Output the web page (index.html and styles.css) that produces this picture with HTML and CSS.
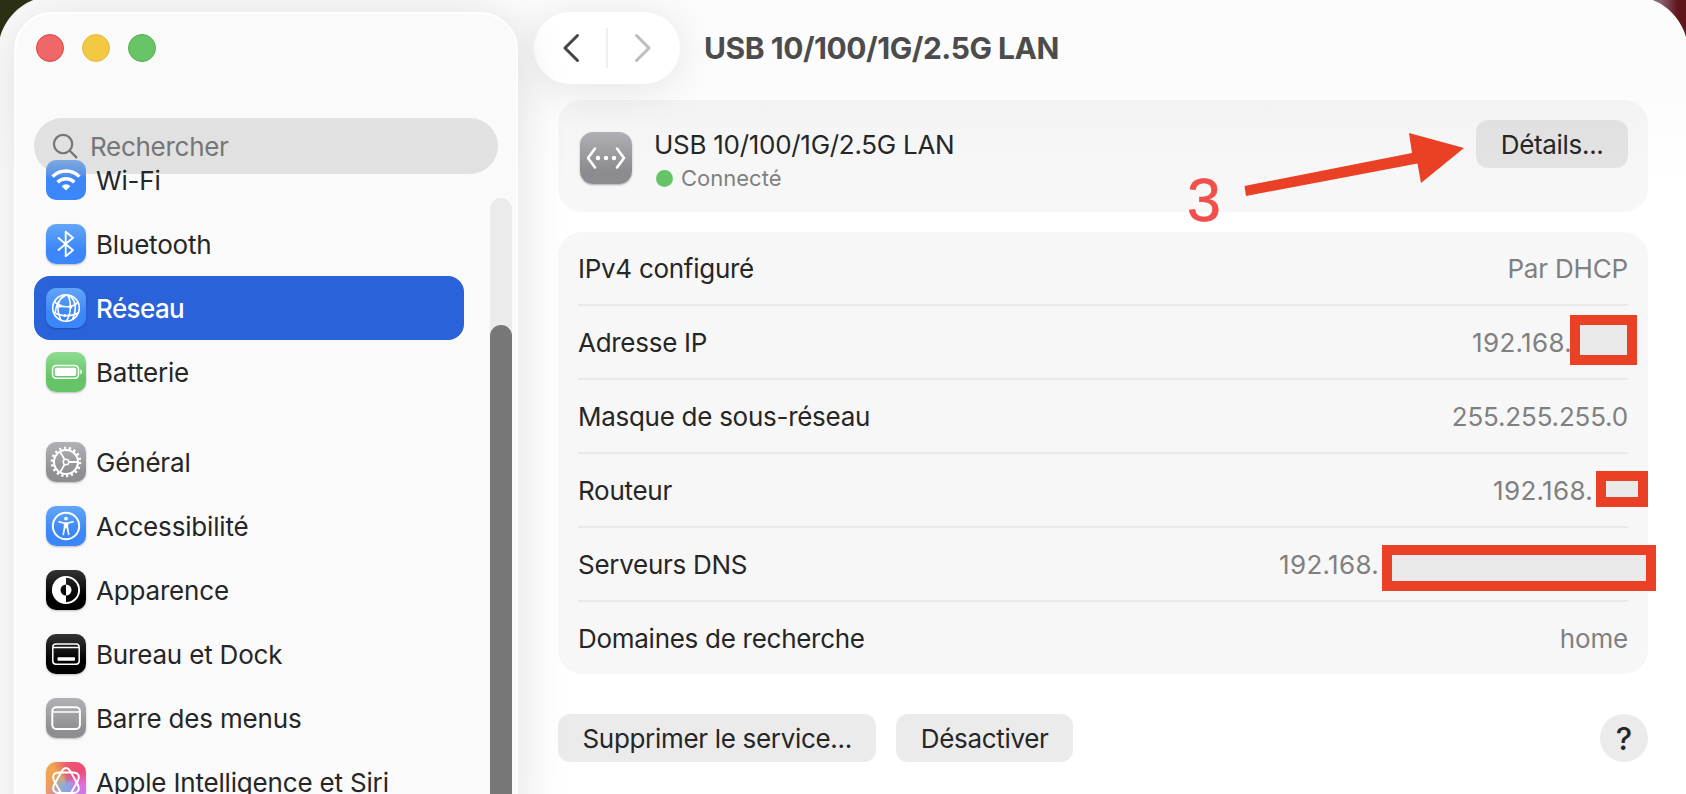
FILE: index.html
```html
<!DOCTYPE html>
<html lang="fr">
<head>
  <meta charset="utf-8">
  <title>Réseau</title>
  <link rel="stylesheet" href="styles.css">
</head>
<body>
  <div class="window">
    <aside class="sidebar">
      <div class="lights">
        <span class="light red"></span>
        <span class="light yellow"></span>
        <span class="light green"></span>
      </div>
      <ul class="menu">
        <li class="item">
          <svg class="icon blue faded" viewBox="0 0 40 40">
            <g fill="none" stroke="#fff" stroke-width="3.4">
              <path d="M6.6 16.6a19 19 0 0 1 26.8 0"/>
              <path d="M11.6 22.2a12 12 0 0 1 16.8 0"/>
            </g>
            <path d="M20 30.6l-4.4-4.4a6.2 6.2 0 0 1 8.8 0z" fill="#fff"/>
          </svg>
          <span>Wi-Fi</span>
        </li>
        <li class="item">
          <svg class="icon blue" viewBox="0 0 40 40">
            <path d="M12.5 14L27 26.2l-7.3 6V7.8l7.3 6L12.5 26" fill="none" stroke="#fff" stroke-width="1.9" stroke-linejoin="round" stroke-linecap="round"/>
          </svg>
          <span>Bluetooth</span>
        </li>
        <li class="item selected">
          <svg class="icon blue" viewBox="0 0 40 40">
            <g fill="none" stroke="#fff" stroke-width="1.6">
              <circle cx="20" cy="20" r="13.3"/>
              <path d="M8.5 13.5c3 4 8.5 5.5 13 5.2 4.5-.3 8.5-1.7 10.5-4.7M7.5 24c6 4.5 19 5 25 .5"/>
              <path d="M18.5 7c-7 5-8.5 14-3.5 25.5M21.5 7c4 6 4 18-1 26M23 7.500c7 4 8 14 3.5 24M20 7c-6 3-10 8-11 19"/>
            </g>
            <g fill="#fff">
              <circle cx="14" cy="18" r="1.8"/>
              <circle cx="24.5" cy="19" r="1.8"/>
              <circle cx="19" cy="27.5" r="1.5"/>
            </g>
          </svg>
          <span>Réseau</span>
        </li>
        <li class="item">
          <svg class="icon lime" viewBox="0 0 40 40">
            <rect x="6.5" y="13.5" width="26" height="12.8" rx="3.8" fill="none" stroke="#fff" stroke-width="1.5"/>
            <rect x="8.8" y="15.7" width="21.4" height="8.4" rx="1.8" fill="#fff"/>
            <path d="M34.3 17.3c2.2 1 2.2 4.2 0 5.2z" fill="#fff"/>
          </svg>
          <span>Batterie</span>
        </li>
      </ul>
      <ul class="menu">
        <li class="item">
          <svg class="icon gray" viewBox="0 0 40 40">
            <circle cx="20" cy="20" r="14" fill="none" stroke="#fff" stroke-width="2.6" stroke-dasharray="2.2 2.687"/>
            <circle cx="20" cy="20" r="12" fill="none" stroke="#fff" stroke-width="2"/>
            <circle cx="20" cy="20" r="2.8" fill="none" stroke="#fff" stroke-width="1.5"/>
            <path d="M23 20h9M18.5 17.4L14 9.6M18.5 22.6L14 30.4" stroke="#fff" stroke-width="1.8"/>
          </svg>
          <span>Général</span>
        </li>
        <li class="item">
          <svg class="icon blue" viewBox="0 0 40 40">
            <circle cx="20" cy="20" r="13.2" fill="none" stroke="#fff" stroke-width="2"/>
            <circle cx="20" cy="12.6" r="1.9" fill="#fff"/>
            <path d="M13 15.8l4.8 1.2h4.4l4.8-1.2M17.3 28.3l1.3-6.8v-4.3h2.8v4.3l1.3 6.8M20 17.5v4" fill="none" stroke="#fff" stroke-width="1.7" stroke-linecap="round" stroke-linejoin="round"/>
          </svg>
          <span>Accessibilité</span>
        </li>
        <li class="item">
          <svg class="icon black" viewBox="0 0 40 40">
            <circle cx="20" cy="20" r="13.1" fill="none" stroke="#fff" stroke-width="1.9"/>
            <path d="M20 6.5a13.5 13.5 0 0 0 0 27v-8a5.5 5.5 0 0 1 0-11z" fill="#fff"/>
            <path d="M20 14.5a5.5 5.5 0 0 1 0 11z" fill="#fff"/>
          </svg>
          <span>Apparence</span>
        </li>
        <li class="item">
          <svg class="icon black" viewBox="0 0 40 40">
            <rect x="6.8" y="10" width="26.4" height="20.2" rx="3.2" fill="none" stroke="#fff" stroke-width="1.5"/>
            <path d="M7 13.5h26" stroke="#fff" stroke-width="1.3"/>
            <rect x="11.5" y="23.3" width="17.5" height="3.4" rx=".8" fill="#fff"/>
          </svg>
          <span>Bureau et Dock</span>
        </li>
        <li class="item">
          <svg class="icon gray" viewBox="0 0 40 40">
            <rect x="6.3" y="9.3" width="27.6" height="21.6" rx="3.8" fill="none" stroke="#fff" stroke-width="2"/>
            <path d="M6.5 14h27" stroke="#fff" stroke-width="1.7"/>
          </svg>
          <span>Barre des menus</span>
        </li>
        <li class="item">
          <svg class="icon siri" viewBox="0 0 40 40">
            <g fill="none" stroke="#fff" stroke-width="1.9">
              <path d="M15.5 9.5q4.500-7 9 0l7.500 13.500q3 7.500-5 8h-14q-8-.5-5-8z"/>
              <path d="M15.500 32q4.500 7 9 0l7.500-13.500q3-7.500-5-8h-14q-8 .5-5 8z"/>
            </g>
          </svg>
          <span>Apple Intelligence et Siri</span>
        </li>
      </ul>
      <div class="search">
        <svg class="lens" viewBox="0 0 28 28">
          <circle cx="11.5" cy="11.5" r="9.5"/>
          <path d="M18.5 18.5l6.8 6.8"/>
        </svg>
        <span>Rechercher</span>
      </div>
      <div class="scrollbar"><div class="thumb"></div></div>
    </aside>

    <main class="content">
      <header class="toolbar">
        <div class="nav">
          <svg class="chevron" viewBox="0 0 20 32"><path d="M16.5 3.5L4 16l12.5 12.5"/></svg>
          <span class="divider"></span>
          <svg class="chevron off" viewBox="0 0 20 32"><path d="M3.5 3.5L16 16 3.5 28.5"/></svg>
        </div>
        <h1 class="title">USB 10/100/1G/2.5G LAN</h1>
      </header>

      <section class="card service">
        <svg class="adapter" viewBox="0 0 52 52">
          <path d="M15 16.5L8 26l7 9.5M37 16.5L44 26l-7 9.5" fill="none" stroke="#fff" stroke-width="2.6" stroke-linecap="round" stroke-linejoin="round"/>
          <g fill="#fff">
            <circle cx="18" cy="26" r="2.2"/>
            <circle cx="26" cy="26" r="2.2"/>
            <circle cx="34" cy="26" r="2.2"/>
          </g>
        </svg>
        <div class="service-text">
          <div class="service-name">USB 10/100/1G/2.5G LAN</div>
          <div class="status"><span class="dot"></span><span>Connecté</span></div>
        </div>
        <button class="btn">Détails...</button>
      </section>

      <section class="card details">
        <div class="row"><span>IPv4 configuré</span><span class="value">Par DHCP</span></div>
        <div class="row"><span>Adresse IP</span><span class="value address">192.168.</span><span class="mask mask-ip"></span></div>
        <div class="row"><span>Masque de sous-réseau</span><span class="value">255.255.255.0</span></div>
        <div class="row"><span>Routeur</span><span class="value router">192.168.</span><span class="mask mask-router"></span></div>
        <div class="row"><span>Serveurs DNS</span><span class="value dns">192.168.</span><span class="mask mask-dns"></span></div>
        <div class="row"><span>Domaines de recherche</span><span class="value">home</span></div>
      </section>

      <footer class="actions">
        <button class="btn">Supprimer le service...</button>
        <button class="btn">Désactiver</button>
        <button class="help">?</button>
      </footer>
    </main>

    <span class="step">3</span>
    <svg class="arrow" viewBox="0 0 222 66">
      <path d="M2.5 56l167.500-33-3-20L222 18l-43 35-3.500-19.500L4 66z"/>
    </svg>
  </div>
</body>
</html>
```

FILE: styles.css
```css
* {
  box-sizing: border-box;
}

body {
  margin: 0;
  height: 794px;
  overflow: hidden;
  background: linear-gradient(90deg, #2b2f14 50%, #8a6070 50%, #8a6070 98.5%, #5e161c 99.5%);
  font-family: Inter, "Liberation Sans", sans-serif;
  font-size: 26px;
  letter-spacing: -0.28px;
  color: #262626;
}

.window {
  position: relative;
  display: flex;
  height: 794px;
  overflow: hidden;
  background: linear-gradient(#fcfcfc 100px, #fff 180px);
  clip-path: inset(-4px -2px 0 -2px round 56px 56px 0 0);
}

/* sidebar */
.sidebar {
  position: relative;
  z-index: 1;
  flex: none;
  width: 504px;
  height: 830px;
  margin: 12px 0 0 14px;
  padding: 20px 18px;
  background: #fafafa;
  border: 2px solid #fff;
  border-radius: 38px;
  box-shadow: 0 4px 50px rgba(0, 0, 0, 0.13);
}

.lights {
  display: flex;
  gap: 18px;
  height: 114px;
  padding-left: 2px;
}

.light {
  width: 28px;
  height: 28px;
  border-radius: 50%;
}

.red {
  background: #ee6769;
  border: 1px solid #e0443e;
}

.yellow {
  background: #f3c944;
  border: 1px solid #e6b93a;
}

.green {
  background: #67c567;
  border: 1px solid #4fb046;
}

.menu {
  position: relative;
  z-index: 1;
  width: 430px;
  margin: 0 0 26px;
  padding: 0;
  list-style: none;
  letter-spacing: -0.18px;
}

.item {
  display: flex;
  align-items: center;
  gap: 10px;
  height: 64px;
  padding-left: 12px;
  border-radius: 16px;
}

.selected {
  background: #2962d9;
  color: #fff;
  font-weight: 500;
  letter-spacing: -0.6px;
}

.icon {
  width: 40px;
  height: 40px;
  border-radius: 10px;
  box-shadow: 0 1px 2px rgba(0, 0, 0, 0.25);
}

.blue {
  background: linear-gradient(#62a6f8, #3b86f8 65%);
}

/* scrolls under the search field */
.faded {
  background: linear-gradient(#7fa9e0, #5a93e6 35%, #3b86f8 45%);
  box-shadow: none;
}

.lime {
  background: linear-gradient(#90dc91, #64c466 65%);
}

.gray {
  background: linear-gradient(#b2b1b6, #8e8d92 80%);
}

.black {
  background: linear-gradient(#333, #000 65%);
}

.siri {
  background:
    radial-gradient(circle at 45% 65%, rgba(120, 180, 225, 0.9), transparent 45%),
    conic-gradient(#ec5a70, #ee4a78 15%, #e070e0 28%, #b080f0 45%, #f29a60 70%, #f0a850 88%, #ec5a70);
}

.search {
  position: absolute;
  top: 104px;
  left: 18px;
  display: flex;
  align-items: center;
  gap: 11px;
  width: 464px;
  height: 56px;
  padding-left: 18px;
  border-radius: 28px;
  background: #e1e1e1;
  color: #767676;
}

.lens {
  width: 27px;
  height: 27px;
  fill: none;
  stroke: #757575;
  stroke-width: 2.3;
  stroke-linecap: round;
}

.scrollbar {
  position: absolute;
  top: 184px;
  right: 4px;
  width: 22px;
  height: 640px;
  padding-top: 127px;
  border-radius: 11px;
  background: #ebebeb;
}

.thumb {
  height: 513px;
  border-radius: 11px;
  background: #777;
}

/* main pane */
.content {
  flex: 1;
  padding: 12px 38px 0 40px;
}

.toolbar {
  display: flex;
  align-items: center;
  height: 72px;
  margin: 0 0 16px -24px;
}

.nav {
  display: flex;
  align-items: center;
  justify-content: space-between;
  width: 146px;
  height: 72px;
  padding: 0 27px;
  border-radius: 36px;
  background: #fff;
  box-shadow: 0 4px 44px rgba(0, 0, 0, 0.1);
}

.chevron {
  width: 20px;
  height: 32px;
  fill: none;
  stroke: #444;
  stroke-width: 3;
  stroke-linecap: round;
  stroke-linejoin: round;
}

.off {
  stroke: #bdbdbd;
}

.divider {
  width: 2px;
  height: 40px;
  background: #efefef;
}

.title {
  margin: 0 0 0 24px;
  font-size: 30px;
  font-weight: 700;
  letter-spacing: -0.47px;
  color: #4c4c4c;
}

.card {
  border-radius: 24px;
  background: rgba(0, 0, 0, 0.032);
}

.service {
  display: flex;
  height: 112px;
  margin-bottom: 20px;
  padding: 20px 20px 0 22px;
  background: linear-gradient(rgba(0, 0, 0, 0.036), rgba(0, 0, 0, 0.032) 50%);
}

.adapter {
  width: 52px;
  height: 52px;
  margin: 12px 22px 0 0;
  border-radius: 13px;
  background: linear-gradient(#b0afb4, #8c8b90 75%);
  box-shadow: 0 1px 2px rgba(0, 0, 0, 0.3);
}

.service-text {
  flex: 1;
  padding-top: 9px;
}

.service-name {
  line-height: 32px;
}

.status {
  display: flex;
  align-items: center;
  gap: 8px;
  margin-top: 3px;
  padding-left: 2px;
  font-size: 22px;
  line-height: 28px;
  letter-spacing: 0;
  color: #808080;
}

.dot {
  width: 17px;
  height: 17px;
  border-radius: 50%;
  background: #64c466;
}

.btn {
  height: 48px;
  padding: 0 24.5px;
  border: none;
  border-radius: 12px;
  background: rgba(0, 0, 0, 0.08);
  color: #262626;
  font: inherit;
  letter-spacing: -0.32px;
}

.details {
  padding: 0 20px;
}

.row {
  position: relative;
  display: flex;
  align-items: center;
  justify-content: space-between;
  height: 74px;
  border-bottom: 2px solid #e9e9e9;
}

.row:last-child {
  height: 72px;
  border-bottom: none;
}

.value {
  color: #808080;
  letter-spacing: -0.18px;
}

/* start of an address, the rest is under its mask */
.address,
.router,
.dns {
  letter-spacing: 0.3px;
}

.address {
  margin-right: 56px;
}

.router {
  margin-right: 35px;
}

.dns {
  margin-right: 249px;
}

.mask {
  position: absolute;
  border: 10px solid #ea4025;
  background: #eaeaea;
}

.mask-ip {
  top: 9px;
  right: -9px;
  width: 67px;
  height: 50px;
}

.mask-router {
  top: 17px;
  right: -20px;
  width: 52px;
  height: 36px;
}

.mask-dns {
  top: 17px;
  right: -28px;
  width: 274px;
  height: 46px;
}

.actions {
  display: flex;
  gap: 20px;
  margin-top: 40px;
}

.help {
  width: 48px;
  height: 48px;
  margin-left: auto;
  padding: 0;
  border: none;
  border-radius: 50%;
  background: #ebebeb;
  color: #262626;
  font: inherit;
  font-size: 31px;
  font-weight: 500;
}

/* annotation */
.step {
  position: absolute;
  top: 165px;
  left: 1187px;
  font-family: "Liberation Sans", sans-serif;
  font-size: 61px;
  line-height: 70px;
  color: #f04f4a;
  -webkit-text-stroke: 0.6px #f04f4a;
}

.arrow {
  position: absolute;
  top: 130px;
  left: 1242px;
  width: 222px;
  height: 66px;
  fill: #ea4025;
}
```
